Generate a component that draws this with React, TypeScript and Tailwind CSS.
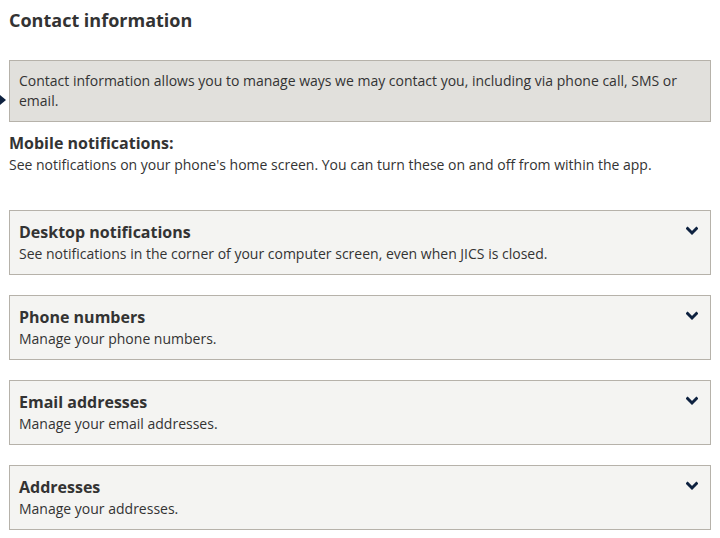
import React from "react";

const Chevron = () => (
  <svg width="12" height="10" viewBox="0 0 12 10" className="absolute right-[12px] top-[15px]">
    <path d="M1.6 2.6 L6 7 L10.4 2.6" fill="none" stroke="#0e2240" strokeWidth="3" strokeLinecap="square" />
  </svg>
);

const Card = ({ title, desc }: { title: string; desc: string }) => (
  <div className="relative border border-[#b6b2aa] bg-[#f4f4f2] pl-[9px] pr-[40px] pt-[10px] pb-[9px]">
    <div className="text-[16px] font-bold leading-[22px] text-[#333333]">{title}</div>
    <div className="text-[14px] leading-[22px] text-[#333333]">{desc}</div>
    <Chevron />
  </div>
);

export default function App() {
  return (
    <div className="w-[720px] h-[538px] bg-white px-[9px] overflow-hidden" style={{ fontFamily: '"Open Sans", sans-serif' }}>
      <h1 className="pt-[8px] text-[18px] font-bold leading-[24px] text-[#333333]">Contact information</h1>
      <div className="relative mt-[28px] border border-[#b6b2aa] bg-[#e1e0dc] pl-[9px] pr-[9px] pt-[10px] pb-[10px] text-[14px] leading-[20px] text-[#333333]">
        Contact information allows you to manage ways we may contact you, including via phone call, SMS or email.
        <div className="absolute left-[-10px] top-[34px] h-0 w-0 border-y-[5px] border-l-[6px] border-y-transparent border-l-[#0e2240]" />
      </div>
      <div className="mt-[10px] text-[16px] font-bold leading-[22px] text-[#333333]">Mobile notifications:</div>
      <div className="pt-[1px] text-[14px] leading-[20px] text-[#333333]">
        See notifications on your phone's home screen. You can turn these on and off from within the app.
      </div>
      <div className="mt-[35px] flex flex-col gap-[20px]">
        <Card title="Desktop notifications" desc="See notifications in the corner of your computer screen, even when JICS is closed." />
        <Card title="Phone numbers" desc="Manage your phone numbers." />
        <Card title="Email addresses" desc="Manage your email addresses." />
        <Card title="Addresses" desc="Manage your addresses." />
      </div>
    </div>
  );
}
